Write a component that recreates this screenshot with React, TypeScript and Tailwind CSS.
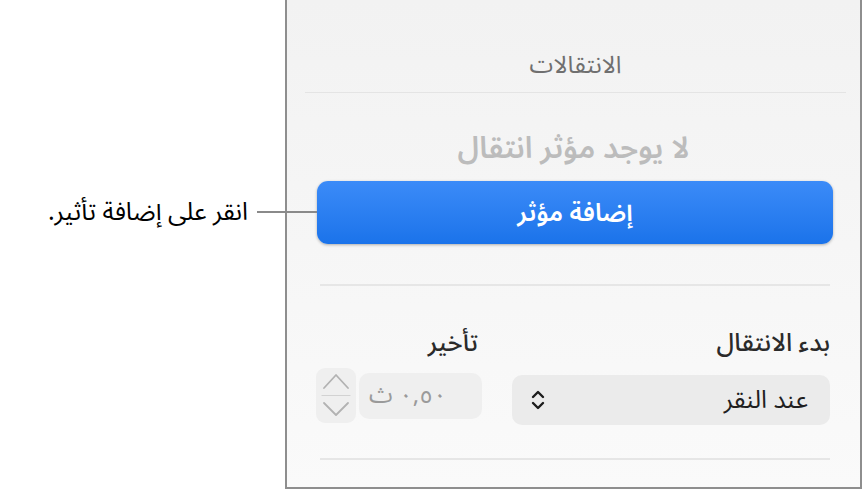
const arabic = '[font-family:"Noto_Sans_Arabic","DejaVu_Sans",sans-serif]';

function UpDown() {
  return (
    <svg width="16" height="24" viewBox="0 0 16 24" fill="none" stroke="#1c1c1c" strokeWidth={2.4}
      strokeLinecap="round" strokeLinejoin="round">
      <path d="M3 9l5-5 5 5" />
      <path d="M3 15l5 5 5-5" />
    </svg>
  );
}

function Stepper() {
  return (
    <svg width="40" height="55" viewBox="0 0 40 55" fill="none" stroke="#b2b2b2" strokeWidth={1.8}
      strokeLinecap="round" strokeLinejoin="round">
      <path d="M8 20l12-13 12 13" />
      <path d="M6 27.5h28" stroke="#d2d2d2" strokeWidth={1.2} />
      <path d="M8 35l12 12 12-12" />
    </svg>
  );
}

export default function App() {
  return (
    <div className={`relative w-[862px] h-[489px] flex bg-white overflow-hidden ${arabic}`}>
      {/* Callout */}
      <div className="w-[285px] shrink-0 pt-[195px] pr-[37px]" dir="rtl">
        <p className="text-[25px] leading-[34px] text-black">انقر على إضافة تأثير.</p>
      </div>
      <div className="absolute left-[257px] top-[211px] w-[60px] h-[2px] bg-[#8a8a8a] z-10" />

      {/* Inspector panel */}
      <div dir="rtl"
        className="w-[577px] h-[489px] border-l-2 border-r-2 border-b-2 border-[#8e8e8e]
                   bg-gradient-to-b from-[#f2f2f2] to-[#fafafa] flex flex-col">
        {/* Header */}
        <div className="mr-[14px] ml-[18px] pt-[49px] pb-[9px] border-b border-[#e4e4e4] text-center">
          <h2 className="text-[24px] leading-[34px] text-[#6f6f6f]">الانتقالات</h2>
        </div>

        <p className="mt-[35px] text-center text-[30px] leading-[42px] font-semibold text-[#bcbcbc]">
          لا يوجد مؤثر انتقال
        </p>

        <div className="mr-[27px] ml-[30px] mt-[11px]">
          <button className="w-full h-[63px] rounded-[11px] bg-gradient-to-b from-[#3b8bf8] to-[#1a73ea]
                             shadow-[0_1px_3px_rgba(0,0,0,0.3)] text-white text-[25px] leading-[34px] font-semibold">
            إضافة مؤثر
          </button>
        </div>

        <div className="mr-[30px] ml-[33px] mt-[40px] h-[2px] bg-[#e6e6e6]" />

        {/* Controls */}
        <div className="mr-[30px] ml-[29px] mt-[39px] flex gap-[30px]">
          <div className="flex-1 flex flex-col">
            <span className="text-[25px] leading-[36px] font-medium text-[#2a2a2a]">بدء الانتقال</span>
            <div className="mt-[14px] h-[50px] rounded-[10px] bg-[#ebebeb] flex items-center justify-between pr-[22px] pl-[18px]">
              <span className="text-[25px] leading-[34px] text-[#1f1f1f]">عند النقر</span>
              <UpDown />
            </div>
          </div>
          <div className="w-[166px] flex flex-col">
            <span className="text-[25px] leading-[36px] font-medium text-[#2a2a2a] mr-[4px]">تأخير</span>
            <div className="mt-[7px] flex items-start gap-[3px]">
              <div className="w-[123px] h-[46px] mt-[5px] rounded-[10px] bg-[#efefef] flex items-center justify-end pl-[10px]">
                <span className="text-[24px] leading-[34px] text-[#9a9a9a]">٠,٥٠ ث</span>
              </div>
              <div className="w-[40px] h-[55px] rounded-[9px] bg-[#efefef]">
                <Stepper />
              </div>
            </div>
          </div>
        </div>

        <div className="mr-[30px] ml-[33px] mt-auto mb-[27px] h-[2px] bg-[#e6e6e6]" />
      </div>
    </div>
  );
}
